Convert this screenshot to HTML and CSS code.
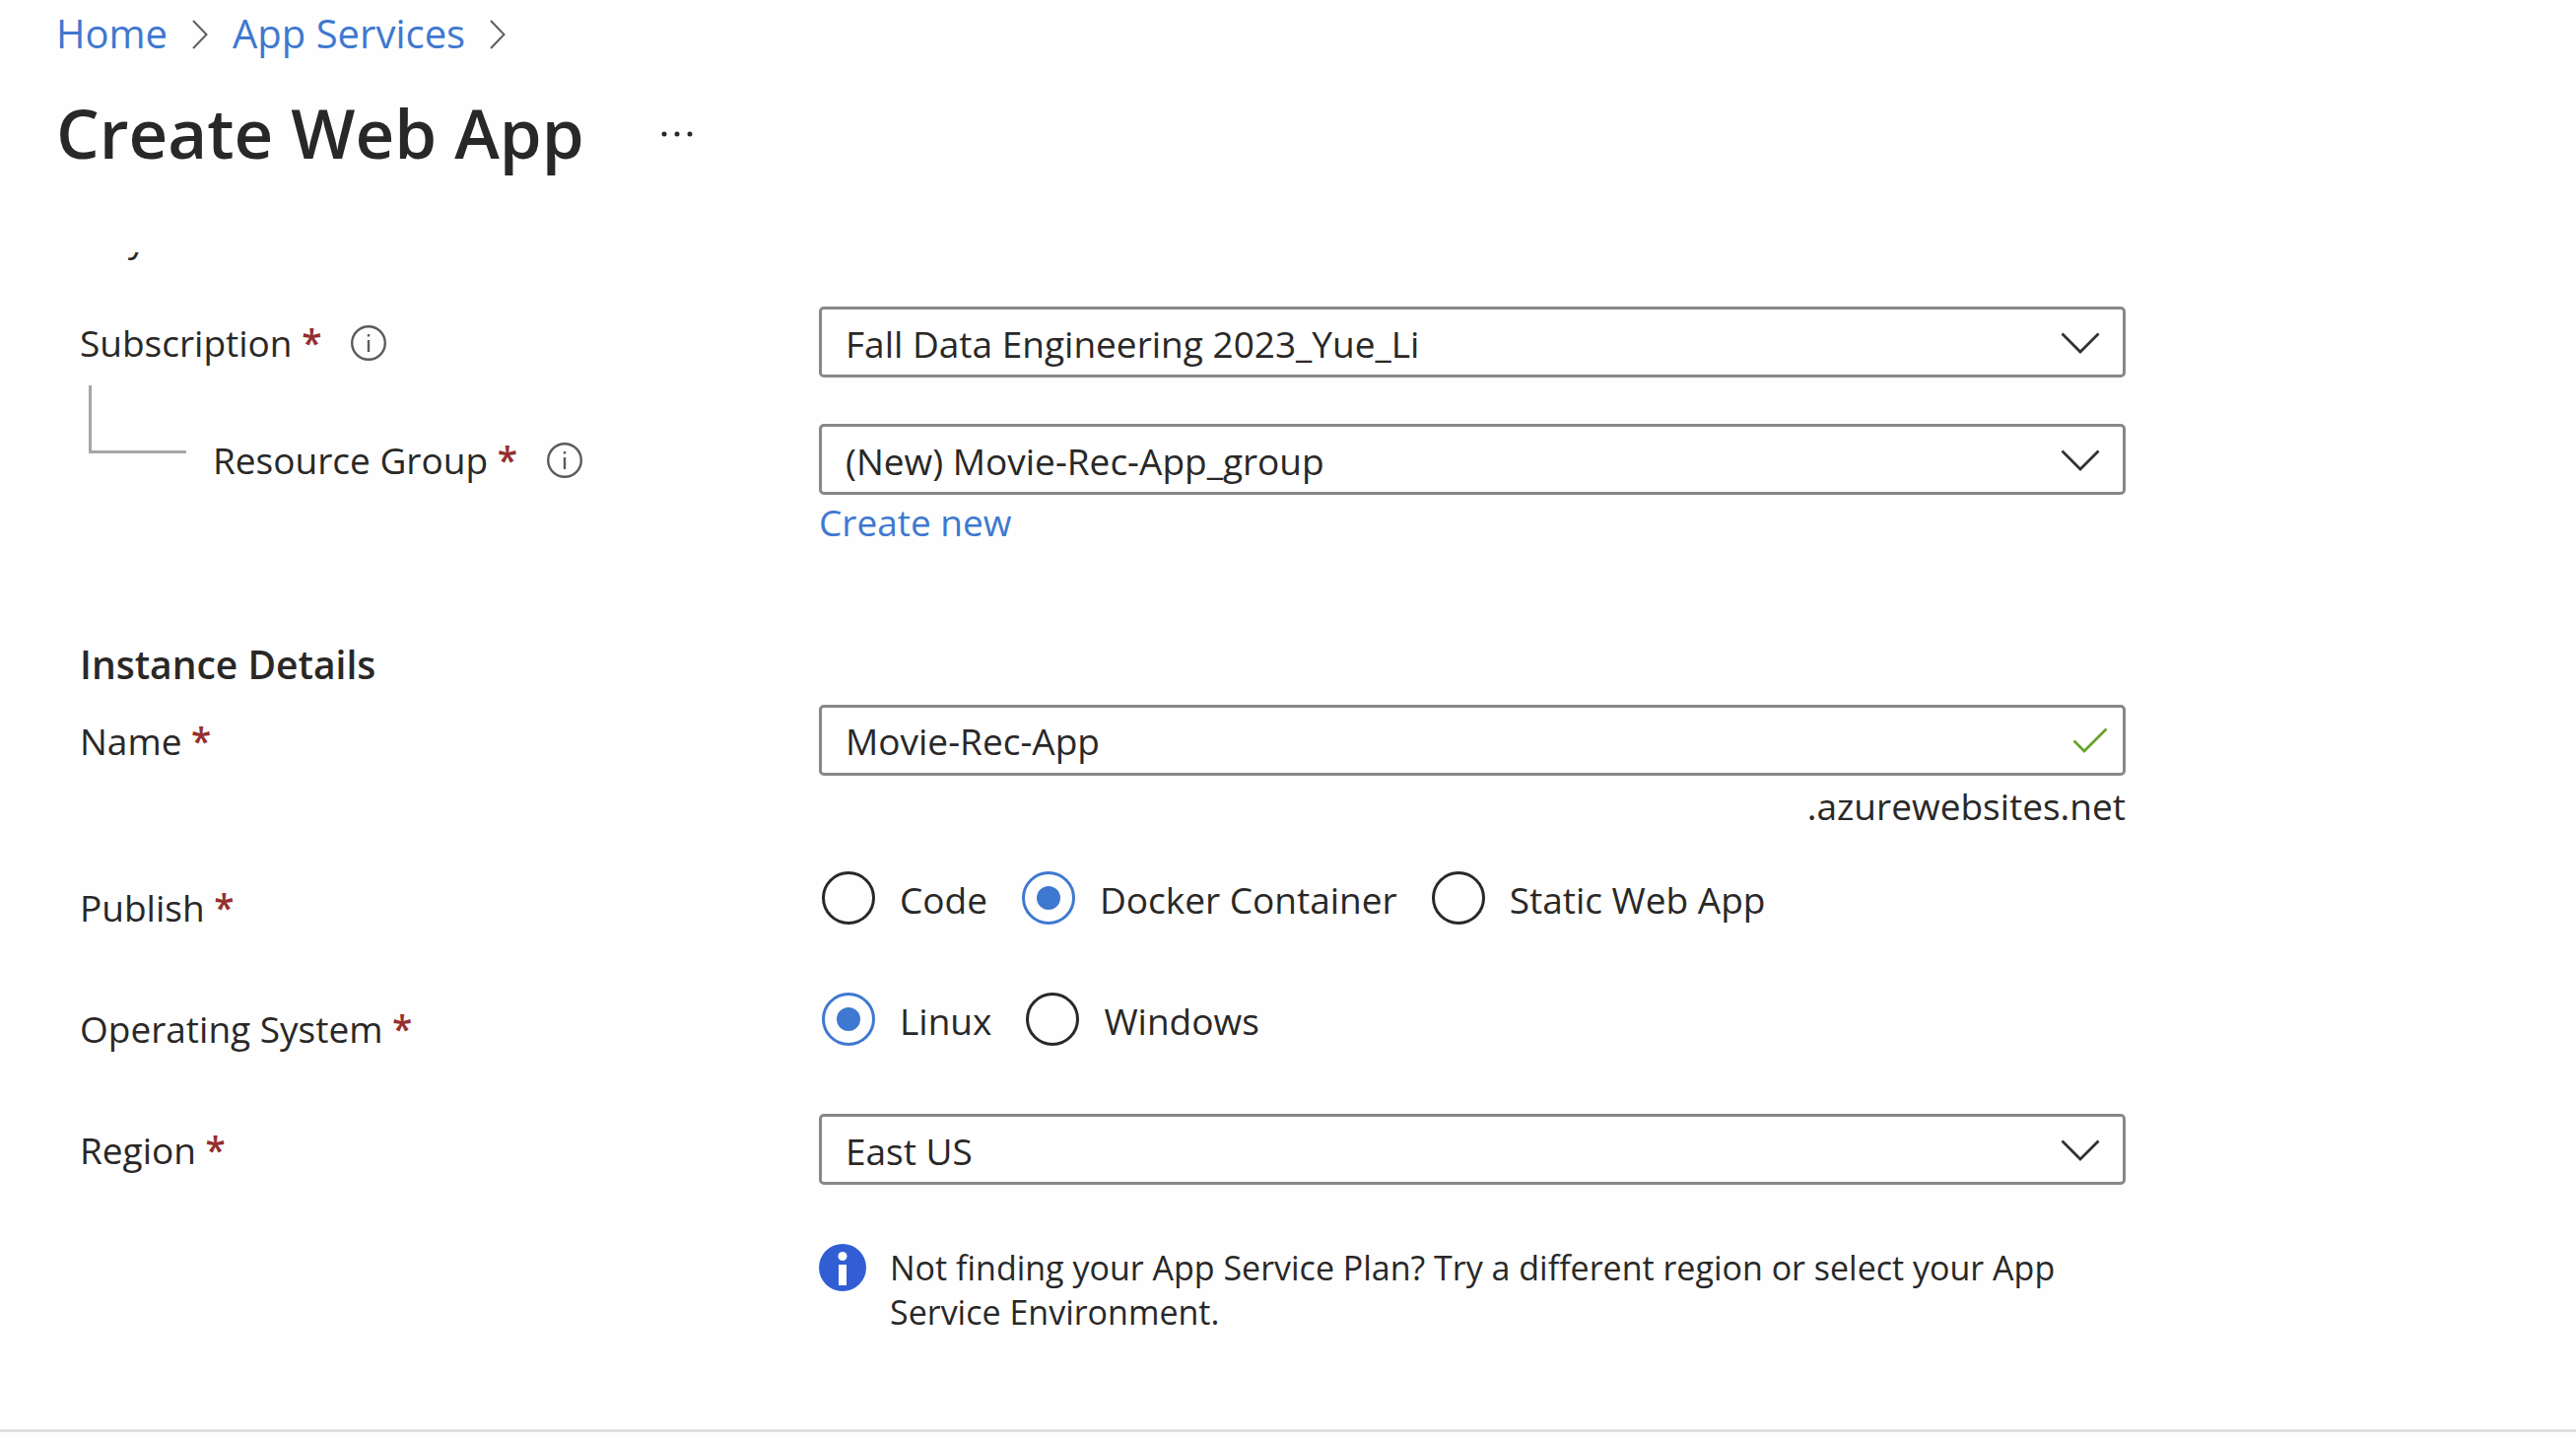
FILE: index.html
```html
<!DOCTYPE html>
<html lang="en">
<head>
  <meta charset="utf-8">
  <meta name="viewport" content="width=device-width, initial-scale=1">
  <title>Create Web App</title>
  <link rel="stylesheet" href="styles.css">
</head>
<body>
  <header class="page-header">
    <nav class="breadcrumb" aria-label="Breadcrumb">
      <a href="#">Home</a>
      <svg class="crumb-arrow" viewBox="0 0 16 30" aria-hidden="true"><path d="M1 1 14.500 15 1 29"/></svg>
      <a href="#">App Services</a>
      <svg class="crumb-arrow" viewBox="0 0 16 30" aria-hidden="true"><path d="M1 1 14.500 15 1 29"/></svg>
    </nav>
    <div class="title-row">
      <h1 class="title">Create Web App</h1>
      <button class="more" type="button" aria-label="More actions">
        <svg viewBox="0 0 34 8" aria-hidden="true"><circle cx="4" cy="4" r="2.500"/><circle cx="17" cy="4" r="2.500"/><circle cx="30" cy="4" r="2.500"/></svg>
      </button>
    </div>
  </header>

  <main class="pane">
    <form class="form">
      <p class="intro">all your resources.</p>

      <div class="row">
        <div class="label">
          <label for="subscription">Subscription <span class="required">*</span></label>
          <button class="info" type="button" aria-label="About subscription">
            <svg viewBox="0 0 36 36" aria-hidden="true"><circle cx="18" cy="18" r="16.800"/><path d="M18 15v12M18 9v2.600"/></svg>
          </button>
        </div>
        <div class="control">
          <div class="field">
            <select class="box" id="subscription"><option>Fall Data Engineering 2023_Yue_Li</option></select>
            <svg class="chevron" viewBox="0 0 40 22" aria-hidden="true"><path d="M1.500 1.500 20 20 38.500 1.500"/></svg>
          </div>
        </div>
      </div>

      <div class="row row-group">
        <div class="label label-nested">
          <label for="group">Resource Group <span class="required">*</span></label>
          <button class="info" type="button" aria-label="About resource group">
            <svg viewBox="0 0 36 36" aria-hidden="true"><circle cx="18" cy="18" r="16.800"/><path d="M18 15v12M18 9v2.600"/></svg>
          </button>
        </div>
        <div class="control">
          <div class="field">
            <select class="box" id="group"><option>(New) Movie-Rec-App_group</option></select>
            <svg class="chevron" viewBox="0 0 40 22" aria-hidden="true"><path d="M1.500 1.500 20 20 38.500 1.500"/></svg>
          </div>
          <a class="create-new" href="#">Create new</a>
        </div>
      </div>

      <h2 class="section-title">Instance Details</h2>

      <div class="row row-name">
        <div class="label"><label for="name">Name <span class="required">*</span></label></div>
        <div class="control">
          <div class="field">
            <input class="box" id="name" type="text" value="Movie-Rec-App">
            <svg class="valid" viewBox="0 0 36 26" aria-hidden="true"><path d="M1.500 13.500 12 24 34.500 1.500"/></svg>
          </div>
          <div class="suffix">.azurewebsites.net</div>
        </div>
      </div>

      <div class="row row-publish" role="radiogroup" aria-labelledby="publish-label">
        <div class="label" id="publish-label"><span>Publish <span class="required">*</span></span></div>
        <div class="radios">
          <label class="choice"><input type="radio" name="publish">Code</label>
          <label class="choice"><input type="radio" name="publish" checked>Docker Container</label>
          <label class="choice"><input type="radio" name="publish">Static Web App</label>
        </div>
      </div>

      <div class="row row-os" role="radiogroup" aria-labelledby="os-label">
        <div class="label" id="os-label"><span>Operating System <span class="required">*</span></span></div>
        <div class="radios">
          <label class="choice"><input type="radio" name="os" checked>Linux</label>
          <label class="choice"><input type="radio" name="os">Windows</label>
        </div>
      </div>

      <div class="row row-region">
        <div class="label"><label for="region">Region <span class="required">*</span></label></div>
        <div class="control">
          <div class="field">
            <select class="box" id="region"><option>East US</option></select>
            <svg class="chevron" viewBox="0 0 40 22" aria-hidden="true"><path d="M1.500 1.500 20 20 38.500 1.500"/></svg>
          </div>
          <div class="notice">
            <svg class="notice-icon" viewBox="0 0 48 48" aria-hidden="true"><circle class="disc" cx="24" cy="24" r="24"/><circle cx="24" cy="12.500" r="4.500"/><path d="M20 21h8v21h-8z"/></svg>
            <p>Not finding your App Service Plan? Try a different region or select your App Service Environment.</p>
          </div>
        </div>
      </div>
    </form>
  </main>

  <footer class="footer"></footer>
</body>
</html>
```
FILE: styles.css
```css
:root {
  --text: #292827;
  --link: #3f78d0;
  --line: #888;
}

*,
*::before {
  box-sizing: border-box;
}

body {
  display: flex;
  flex-direction: column;
  min-height: 100vh;
  margin: 0;
  background: #fefefe;
  color: var(--text);
  font-family: "Open Sans", "Noto Sans", sans-serif;
  font-size: 37px;
  line-height: 52px;
}

h1, h2, p {
  margin: 0;
}

a {
  color: var(--link);
  text-decoration: none;
}

button {
  padding: 0;
  border: 0;
  background: none;
  cursor: pointer;
}

svg {
  display: block;
  fill: none;
}

.page-header {
  padding-left: 57px;
}

.breadcrumb {
  display: flex;
  align-items: center;
  gap: 25px;
  font-size: 40px;
  line-height: 68px;
}

.crumb-arrow {
  width: 16px;
  height: 30px;
  margin-top: 2px;
  stroke: #605e5c;
  stroke-width: 2;
}

.title-row {
  display: flex;
  align-items: center;
  gap: 77px;
}

.title {
  font-size: 69px;
  font-weight: 600;
  line-height: 132px;
}

.more {
  padding-top: 4px;
}

.more svg {
  width: 34px;
  height: 8px;
  fill: var(--text);
}

.pane {
  flex: 1;
  overflow: hidden;
  margin-top: 56px;
  padding: 0 81px 90px;
}

.form {
  max-width: 2076px;
}

/* The pane is scrolled, so only the tail of the introduction shows. */
.intro {
  margin-top: -41px;
  margin-bottom: 44px;
}

.row {
  display: grid;
  grid-template-columns: 750px minmax(0, 1fr);
  align-items: start;
}

.row-group {
  position: relative;
  margin-top: 45px;
}

.row-group::before {
  position: absolute;
  top: -39px;
  left: 9px;
  width: 99px;
  height: 69px;
  border: solid #a6a6a6;
  border-width: 0 0 3px 3px;
  content: "";
}

.row-name {
  margin-top: 15px;
}

.row-publish {
  margin-top: 40px;
}

.row-os,
.row-region {
  margin-top: 49px;
}

.label {
  display: flex;
  align-items: center;
  gap: 30px;
  line-height: 74px;
}

.label-nested {
  padding-left: 135px;
}

.required {
  color: #942f2f;
  font-weight: 600;
}

.info svg {
  width: 36px;
  height: 36px;
  stroke: #5c5b5a;
  stroke-width: 2.400;
}

.control {
  display: flex;
  flex-direction: column;
}

.field {
  position: relative;
}

.box {
  display: block;
  width: 100%;
  height: 72px;
  padding: 0 80px 0 24px;
  border: 3px solid var(--line);
  border-radius: 5px;
  background: #fff;
  color: var(--text);
  font: inherit;
  appearance: none;
}

select.box {
  padding-top: 3px;
}

.chevron {
  position: absolute;
  top: 26px;
  right: 26px;
  width: 40px;
  height: 22px;
  stroke: #323130;
  stroke-width: 2.800;
  pointer-events: none;
}

.valid {
  position: absolute;
  top: 23px;
  right: 18px;
  width: 36px;
  height: 26px;
  stroke: #6aa22c;
  stroke-width: 2.800;
}

.create-new {
  align-self: start;
  margin-top: 2px;
}

.suffix {
  margin-top: 5px;
  text-align: right;
}

.section-title {
  margin-top: 92px;
  font-size: 39px;
  font-weight: 600;
  line-height: 52px;
}

.radios {
  display: flex;
  flex-wrap: wrap;
  gap: 35px;
  padding-left: 3px;
}

.choice {
  display: flex;
  align-items: flex-start;
  gap: 25px;
  line-height: 57px;
}

.choice input {
  display: grid;
  place-items: center;
  width: 54px;
  height: 54px;
  margin: 0;
  border: 3px solid var(--text);
  border-radius: 50%;
  appearance: none;
}

.choice input:checked {
  border-color: var(--link);
}

.choice input:checked::before {
  width: 24px;
  height: 24px;
  border-radius: 50%;
  background: var(--link);
  content: "";
}

.notice {
  display: flex;
  align-items: flex-start;
  gap: 24px;
  margin-top: 60px;
  font-size: 34px;
  line-height: 45px;
}

.notice p {
  padding-top: 2px;
}

.notice-icon {
  flex: none;
  width: 48px;
  height: 48px;
  fill: #fff;
}

.notice-icon .disc {
  fill: #315fd3;
}

.footer {
  height: 16px;
  border-top: 3px solid #e0e0e0;
}
```
